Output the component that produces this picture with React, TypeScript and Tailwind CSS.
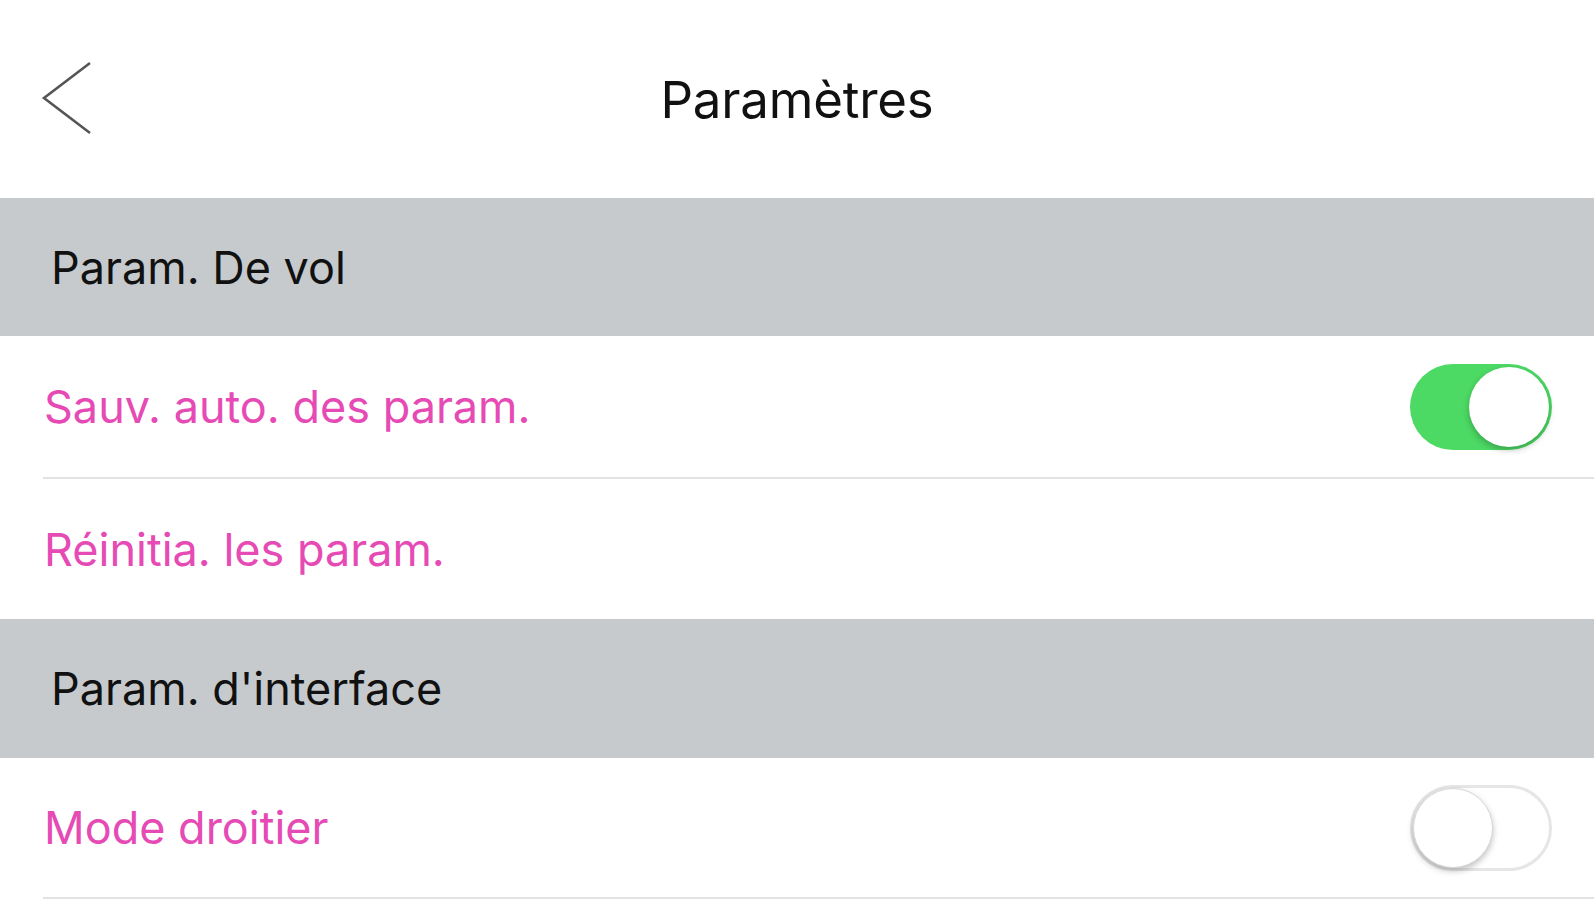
import React from "react";

function Toggle({ on }: { on: boolean }) {
  if (on) {
    return (
      <div className="relative w-[142px] h-[86px] rounded-full bg-[#4cd964]">
        <div className="absolute right-[3px] top-[3px] w-[80px] h-[80px] rounded-full bg-white shadow-[0_3px_6px_rgba(0,0,0,0.25)]" />
      </div>
    );
  }
  return (
    <div className="relative w-[142px] h-[86px] rounded-full bg-white border-[3px] border-[#e6e6e6]">
      <div className="absolute left-[0px] top-[0px] w-[80px] h-[80px] rounded-full bg-white border border-[#d8d8d8] shadow-[0_3px_6px_rgba(0,0,0,0.25)]" />
    </div>
  );
}

export default function App() {
  const font = { fontFamily: "Inter, 'Noto Sans', sans-serif" };
  return (
    <div className="w-[1594px] h-[900px] bg-white overflow-hidden flex flex-col" style={font}>
      <div className="h-[198px] shrink-0 relative flex items-center justify-center">
        <svg className="absolute left-[40px] top-[60px]" width="56" height="76" viewBox="0 0 56 76">
          <path d="M50 3 L4 38 L50 73" fill="none" stroke="#555" strokeWidth="2.6" />
        </svg>
        <span className="text-[51px] text-[#111] tracking-[-0.2px] leading-none">Paramètres</span>
      </div>
      <div className="h-[138px] shrink-0 bg-[#c6cacd] flex items-center pl-[51px]">
        <span className="text-[45px] text-[#111] leading-none">Param. De vol</span>
      </div>
      <div className="h-[141px] shrink-0 flex items-center justify-between pl-[44px] pr-[42px] relative">
        <span className="text-[45px] text-[#e64bb5] leading-none">Sauv. auto. des param.</span>
        <Toggle on={true} />
      </div>
      <div className="h-[2px] shrink-0 ml-[43px] bg-[#e3e3e3]" />
      <div className="h-[140px] shrink-0 flex items-center pl-[44px]">
        <span className="text-[45px] text-[#e64bb5] leading-none">Réinitia. les param.</span>
      </div>
      <div className="h-[139px] shrink-0 bg-[#c6cacd] flex items-center pl-[51px]">
        <span className="text-[45px] text-[#111] leading-none">Param. d'interface</span>
      </div>
      <div className="h-[139px] shrink-0 flex items-center justify-between pl-[44px] pr-[42px]">
        <span className="text-[45px] text-[#e64bb5] leading-none">Mode droitier</span>
        <Toggle on={false} />
      </div>
      <div className="h-[2px] shrink-0 ml-[43px] bg-[#e3e3e3]" />
    </div>
  );
}
